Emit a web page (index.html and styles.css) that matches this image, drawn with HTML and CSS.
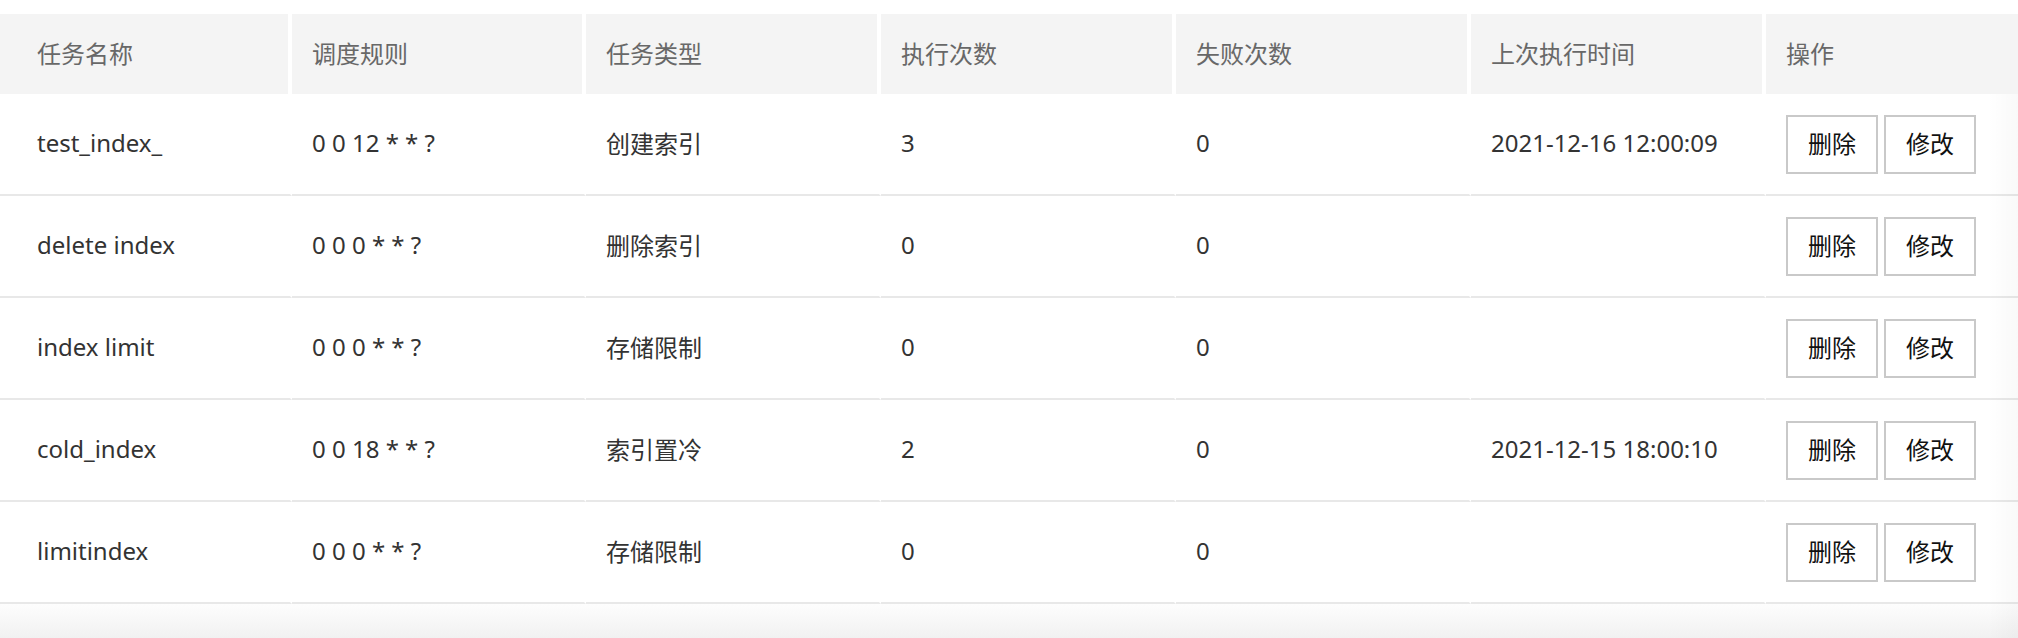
FILE: index.html
```html
<!DOCTYPE html>
<html lang="zh-CN">
<head>
    <meta charset="UTF-8">
    <title>定时任务</title>
    <link rel="stylesheet" href="styles.css">
</head>
<body>
    <div class="table-wrap">
        <table class="task-table">
            <colgroup>
                <col class="c1">
                <col class="c2">
                <col class="c3">
                <col class="c3">
                <col class="c3">
                <col class="c3">
                <col>
            </colgroup>
            <thead>
                <tr>
                    <th>任务名称</th>
                    <th>调度规则</th>
                    <th>任务类型</th>
                    <th>执行次数</th>
                    <th>失败次数</th>
                    <th>上次执行时间</th>
                    <th>操作</th>
                </tr>
            </thead>
            <tbody>
                <tr>
                    <td>test_index_</td>
                    <td>0 0 12 * * ?</td>
                    <td>创建索引</td>
                    <td>3</td>
                    <td>0</td>
                    <td>2021-12-16 12:00:09</td>
                    <td class="ops"><button class="btn">删除</button><button class="btn">修改</button></td>
                </tr>
                <tr>
                    <td>delete index</td>
                    <td>0 0 0 * * ?</td>
                    <td>删除索引</td>
                    <td>0</td>
                    <td>0</td>
                    <td></td>
                    <td class="ops"><button class="btn">删除</button><button class="btn">修改</button></td>
                </tr>
                <tr>
                    <td>index limit</td>
                    <td>0 0 0 * * ?</td>
                    <td>存储限制</td>
                    <td>0</td>
                    <td>0</td>
                    <td></td>
                    <td class="ops"><button class="btn">删除</button><button class="btn">修改</button></td>
                </tr>
                <tr>
                    <td>cold_index</td>
                    <td>0 0 18 * * ?</td>
                    <td>索引置冷</td>
                    <td>2</td>
                    <td>0</td>
                    <td>2021-12-15 18:00:10</td>
                    <td class="ops"><button class="btn">删除</button><button class="btn">修改</button></td>
                </tr>
                <tr>
                    <td>limitindex</td>
                    <td>0 0 0 * * ?</td>
                    <td>存储限制</td>
                    <td>0</td>
                    <td>0</td>
                    <td></td>
                    <td class="ops"><button class="btn">删除</button><button class="btn">修改</button></td>
                </tr>
            </tbody>
        </table>
        <div class="table-foot"></div>
        <div class="edge-shadow"></div>
    </div>
</body>
</html>
```

FILE: styles.css
```css
body {
    margin: 0;
    padding-top: 14px;
    background-color: #fff;
    font-family: "Noto Sans", "Noto Sans CJK SC", sans-serif;
    font-size: 24px;
    color: #333;
    overflow: hidden;
}

.table-wrap {
    position: relative;
}

.task-table {
    width: 100%;
    table-layout: fixed;
    border-collapse: separate;
    border-spacing: 0;
}

.task-table .c1 {
    width: 292px;
}

.task-table .c2 {
    width: 294px;
}

.task-table .c3 {
    width: 295px;
}

.task-table th {
    height: 76px;
    padding: 0 20px 4px;
    background-color: #f4f4f4;
    background-clip: padding-box;
    border-right: 4px solid #fff;
    color: #686868;
    font-weight: normal;
    text-align: left;
    vertical-align: middle;
}

.task-table td {
    height: 97px;
    padding: 0 20px 3px;
    border-right: 2px solid #fff;
    border-bottom: 2px solid #e8e8e8;
    vertical-align: middle;
    white-space: nowrap;
}

.task-table td.ops {
    height: 100px;
    padding-bottom: 0;
}

.task-table th:first-child,
.task-table td:first-child {
    padding-left: 37px;
}

.task-table th:last-child,
.task-table td:last-child {
    border-right: none;
}

.btn {
    width: 92px;
    height: 59px;
    margin-right: 6px;
    padding: 0 0 3px;
    background-color: #fff;
    border: 2px solid #c9c9c9;
    font-family: "Noto Sans CJK SC", sans-serif;
    font-size: 24px;
    color: #111;
    vertical-align: middle;
    cursor: pointer;
}

.table-foot {
    height: 40px;
    background: linear-gradient(#fdfdfd, #efefef);
}

.edge-shadow {
    position: absolute;
    top: 80px;
    right: 0;
    bottom: 0;
    width: 30px;
    background: linear-gradient(to right, rgba(0, 0, 0, 0), rgba(0, 0, 0, 0.025));
}
```
